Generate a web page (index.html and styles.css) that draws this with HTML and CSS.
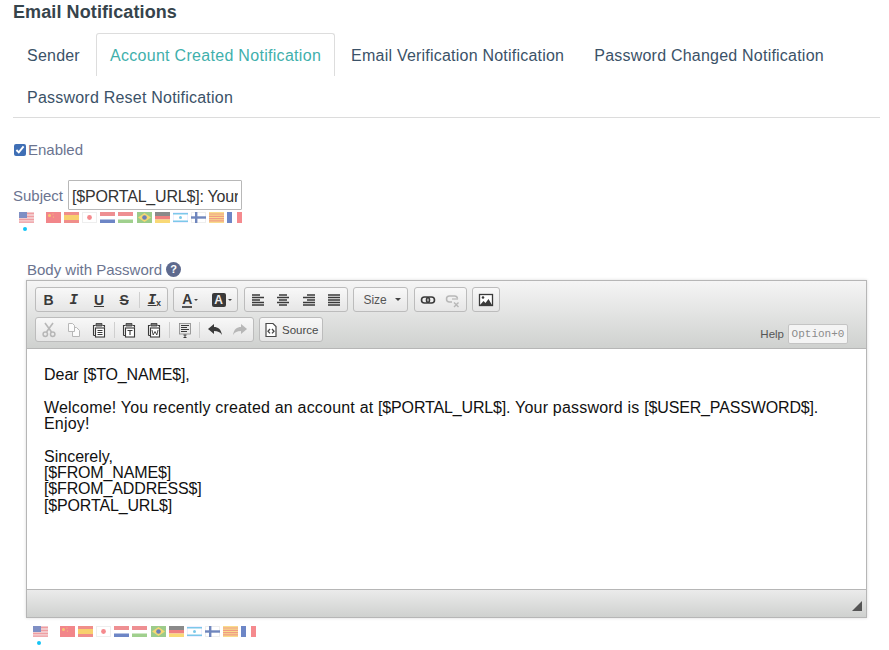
FILE: index.html
```html
<!DOCTYPE html>
<html lang="en">
<head>
<meta charset="utf-8">
<title>Email Notifications</title>
<link rel="stylesheet" href="styles.css">
</head>
<body>
<svg class="sprite" width="0" height="0" aria-hidden="true">
  <symbol id="f-us" viewBox="0 0 15 11"><rect width="15" height="11" fill="#f3c9cb"/><path d="M0 1.5h15M0 4.5h15M0 7.5h15M0 10.2h15" stroke="#ef9ea2" stroke-width="1"/><rect width="8" height="6" fill="#7f8fc4"/></symbol>
  <symbol id="f-cn" viewBox="0 0 15 11"><rect width="15" height="11" fill="#f2868a"/><circle cx="3.5" cy="3.5" r="1.5" fill="#f6c873"/><circle cx="7" cy="2" r=".6" fill="#f6c873"/><circle cx="7.5" cy="5" r=".6" fill="#f6c873"/></symbol>
  <symbol id="f-es" viewBox="0 0 15 11"><rect width="15" height="11" fill="#f08e8a"/><rect y="3" width="15" height="5" fill="#f8d06e"/></symbol>
  <symbol id="f-jp" viewBox="0 0 15 11"><rect x=".5" y=".5" width="14" height="10" fill="#fff" stroke="#eee"/><circle cx="7.5" cy="5.5" r="2.4" fill="#f58a8e"/></symbol>
  <symbol id="f-nl" viewBox="0 0 15 11"><rect width="15" height="4" fill="#ee8f92"/><rect y="4" width="15" height="3.500" fill="#fff"/><rect y="7.500" width="15" height="3.500" fill="#6d86c6"/></symbol>
  <symbol id="f-hu" viewBox="0 0 15 11"><rect width="15" height="4" fill="#ee8f92"/><rect y="4" width="15" height="3.500" fill="#fff"/><rect y="7.500" width="15" height="3.500" fill="#a0d08e"/></symbol>
  <symbol id="f-br" viewBox="0 0 15 11"><rect width="15" height="11" fill="#9ccb8a"/><path d="M7.500 1 14 5.500 7.500 10 1 5.500z" fill="#f5d873"/><circle cx="7.500" cy="5.500" r="2.300" fill="#6a80b8"/></symbol>
  <symbol id="f-de" viewBox="0 0 15 11"><rect width="15" height="4" fill="#8a8a8a"/><rect y="4" width="15" height="3.500" fill="#ee8080"/><rect y="7.500" width="15" height="3.500" fill="#f9d976"/></symbol>
  <symbol id="f-il" viewBox="0 0 15 11"><rect x=".5" y=".5" width="14" height="10" fill="#fff" stroke="#eef"/><rect y="1" width="15" height="1.500" fill="#7cc8ea"/><rect y="8.500" width="15" height="1.500" fill="#7cc8ea"/><circle cx="7.500" cy="5.500" r="1.500" fill="#7cc8ea"/></symbol>
  <symbol id="f-fi" viewBox="0 0 15 11"><rect x=".5" y=".5" width="14" height="10" fill="#fff" stroke="#eee"/><rect y="4.300" width="15" height="2.400" fill="#6f86bd"/><rect x="4" width="2.400" height="11" fill="#6f86bd"/></symbol>
  <symbol id="f-ca" viewBox="0 0 15 11"><rect width="15" height="11" fill="#f9dc8c"/><path d="M0 2h15M0 4.300h15M0 6.600h15M0 8.900h15" stroke="#f09a84" stroke-width="1.200"/></symbol>
  <symbol id="f-fr" viewBox="0 0 15 11"><rect width="15" height="11" fill="#fff"/><rect width="5" height="11" fill="#6d86c6"/><rect x="10" width="5" height="11" fill="#f58a8e"/></symbol>

  <symbol id="i-cut" viewBox="0 0 16 16"><path d="M4 1l6.500 9M12 1L5.500 10" fill="none" stroke="currentColor" stroke-width="1.600"/><circle cx="4.300" cy="12.300" r="2.200" fill="none" stroke="currentColor" stroke-width="1.500"/><circle cx="11.700" cy="12.300" r="2.200" fill="none" stroke="currentColor" stroke-width="1.500"/></symbol>
  <symbol id="i-copy" viewBox="0 0 16 16"><path d="M2.500 1.500h4l2 2v6h-6zM8.500 5.500h2l3 3v6h-7v-5" fill="#fff" stroke="currentColor"/></symbol>
  <symbol id="i-paste" viewBox="0 0 16 16"><path d="M2.500 13.500v-10h2M11.500 3.500h2v2" fill="none" stroke="currentColor" stroke-width="1.100"/><path d="M2.500 13.500h2" stroke="currentColor"/><path d="M5 1.500h6V4H5z" fill="#777" stroke="currentColor" stroke-width=".8"/><rect x="4.500" y="6" width="9" height="9" fill="#fff" stroke="currentColor" stroke-width="1.100"/><path d="M6.500 8.500h5M6.500 10.500h5M6.500 12.500h5" stroke="currentColor"/></symbol>
  <symbol id="i-paste-t" viewBox="0 0 16 16"><path d="M2.500 13.500v-10h2M11.500 3.500h2v2" fill="none" stroke="currentColor" stroke-width="1.100"/><path d="M2.500 13.500h2" stroke="currentColor"/><path d="M5 1.500h6V4H5z" fill="#777" stroke="currentColor" stroke-width=".8"/><rect x="4.500" y="6" width="9" height="9" fill="#fff" stroke="currentColor" stroke-width="1.100"/><path d="M6.500 8.500h5M9 8.500v4.500" stroke="currentColor" stroke-width="1.100"/></symbol>
  <symbol id="i-paste-w" viewBox="0 0 16 16"><path d="M2.500 13.500v-10h2M11.500 3.500h2v2" fill="none" stroke="currentColor" stroke-width="1.100"/><path d="M2.500 13.500h2" stroke="currentColor"/><path d="M5 1.500h6V4H5z" fill="#777" stroke="currentColor" stroke-width=".8"/><rect x="4.500" y="6" width="9" height="9" fill="#fff" stroke="currentColor" stroke-width="1.100"/><path d="M6 8l1.200 5L9 9.500l1.800 3.500L12 8" fill="none" stroke="currentColor" stroke-width=".9"/></symbol>
  <symbol id="i-spell" viewBox="0 0 16 16"><rect x="2.500" y="1.500" width="11" height="10.500" fill="#e8e8e8" stroke="#888" stroke-width=".8"/><path d="M4 3.500h8M4 5.500h6M4 7.500h8M4 9.500h6" stroke="currentColor"/><path d="M6.500 13h3M8 13v2.500M6.500 15.500h3" stroke="currentColor"/></symbol>
  <symbol id="i-undo" viewBox="0 0 16 16"><path d="M1 7l6-5v3c4 0 7 2 8 8-2-3-4-4-8-4v3z" fill="currentColor"/></symbol>
  <symbol id="i-redo" viewBox="0 0 16 16"><path d="M15 7L9 2v3C5 5 2 7 1 13c2-3 4-4 8-4v3z" fill="currentColor"/></symbol>
  <symbol id="i-left" viewBox="0 0 16 16"><path d="M2 3h8M2 5.500h12M2 8h8M2 10.500h12M2 13h12" stroke="currentColor" stroke-width="1.500"/></symbol>
  <symbol id="i-center" viewBox="0 0 16 16"><path d="M4 3h8M2 5.500h12M4 8h8M2 10.500h12M4 13h8" stroke="currentColor" stroke-width="1.500"/></symbol>
  <symbol id="i-right" viewBox="0 0 16 16"><path d="M6 3h8M2 5.500h12M6 8h8M2 10.500h12M2 13h12" stroke="currentColor" stroke-width="1.500"/></symbol>
  <symbol id="i-justify" viewBox="0 0 16 16"><path d="M2 3h12M2 5.500h12M2 8h12M2 10.500h12M2 13h12" stroke="currentColor" stroke-width="1.500"/></symbol>
  <symbol id="i-link" viewBox="0 0 16 16"><rect x="1.500" y="5" width="8" height="6" rx="3" fill="none" stroke="currentColor" stroke-width="1.600"/><rect x="6.500" y="5" width="8" height="6" rx="3" fill="none" stroke="currentColor" stroke-width="1.600"/></symbol>
  <symbol id="i-unlink" viewBox="0 0 16 16"><path d="M7 10H4.500a3 3 0 0 1 0-6h5a3 3 0 0 1 3 2.500" fill="none" stroke="currentColor" stroke-width="1.500"/><path d="M9 10.500l4.500 4.500M13.500 10.500L9 15" stroke="currentColor" stroke-width="1.400"/><path d="M7 7h6" stroke="currentColor" stroke-width="1.200"/></symbol>
  <symbol id="i-image" viewBox="0 0 16 16"><rect x="1.500" y="2.500" width="13" height="11" fill="#fff" stroke="currentColor" stroke-width="1.300"/><circle cx="5" cy="5.500" r="1.300" fill="currentColor"/><path d="M2 13l3.500-4 2 2 3-4 3.500 6z" fill="currentColor"/></symbol>
  <symbol id="i-source" viewBox="0 0 16 16"><path d="M3 1.500h7l3 3v10H3z" fill="#fff" stroke="currentColor" stroke-width="1.200"/><path d="M7 7L5 9.200 7 11.400M9 7l2 2.200-2 2.200" fill="none" stroke="currentColor" stroke-width="1.300"/></symbol>
</svg>

<main class="page">
  <h1 class="title">Email Notifications</h1>

  <nav class="tabs">
    <a class="tab">Sender</a>
    <a class="tab tab-active">Account Created Notification</a>
    <a class="tab">Email Verification Notification</a>
    <a class="tab">Password Changed Notification</a>
    <a class="tab">Password Reset Notification</a>
  </nav>

  <label class="enabled"><input class="check" type="checkbox" checked>Enabled</label>

  <div class="subject">
    <label class="field-label" for="subject">Subject</label>
    <input class="subject-input" id="subject" type="text" value="[$PORTAL_URL$]: Your password">
  </div>

  <div class="flags flags-subject">
    <span class="flag flag-current"><svg width="15" height="11"><use href="#f-us"/></svg></span>
    <span class="flag"><svg width="15" height="11"><use href="#f-cn"/></svg></span>
    <span class="flag"><svg width="15" height="11"><use href="#f-es"/></svg></span>
    <span class="flag"><svg width="15" height="11"><use href="#f-jp"/></svg></span>
    <span class="flag"><svg width="15" height="11"><use href="#f-nl"/></svg></span>
    <span class="flag"><svg width="15" height="11"><use href="#f-hu"/></svg></span>
    <span class="flag"><svg width="15" height="11"><use href="#f-br"/></svg></span>
    <span class="flag"><svg width="15" height="11"><use href="#f-de"/></svg></span>
    <span class="flag"><svg width="15" height="11"><use href="#f-il"/></svg></span>
    <span class="flag"><svg width="15" height="11"><use href="#f-fi"/></svg></span>
    <span class="flag"><svg width="15" height="11"><use href="#f-ca"/></svg></span>
    <span class="flag"><svg width="15" height="11"><use href="#f-fr"/></svg></span>
  </div>

  <section class="body-field">
    <div class="body-label"><span class="field-label">Body with Password</span><span class="hint">?</span></div>

    <div class="editor">
      <div class="toolbar">
        <div class="tool-row">
          <div class="group">
            <span class="btn txt"><b>B</b></span>
            <span class="btn txt"><b class="slab">I</b></span>
            <span class="btn txt"><b class="under">U</b></span>
            <span class="btn txt"><b class="strike">S</b></span>
            <span class="sep"></span>
            <span class="btn txt"><b class="slab under">I</b><b class="sub">x</b></span>
          </div>
          <div class="group">
            <span class="btn btn-color txt"><b class="a-fore">A</b><span class="caret-small"></span></span>
            <span class="btn btn-color txt"><b class="a-back">A</b><span class="caret-small"></span></span>
          </div>
          <div class="group">
            <span class="btn wide"><svg width="16" height="16"><use href="#i-left"/></svg></span>
            <span class="btn wide"><svg width="16" height="16"><use href="#i-center"/></svg></span>
            <span class="btn wide"><svg width="16" height="16"><use href="#i-right"/></svg></span>
            <span class="btn wide"><svg width="16" height="16"><use href="#i-justify"/></svg></span>
          </div>
          <div class="group combo"><span>Size</span><span class="caret"></span></div>
          <div class="group">
            <span class="btn wide"><svg width="16" height="16"><use href="#i-link"/></svg></span>
            <span class="btn wide off"><svg width="16" height="16"><use href="#i-unlink"/></svg></span>
          </div>
          <div class="group">
            <span class="btn wide"><svg width="16" height="16"><use href="#i-image"/></svg></span>
          </div>
        </div>
        <div class="tool-row">
          <div class="group">
            <span class="btn off"><svg width="16" height="16"><use href="#i-cut"/></svg></span>
            <span class="btn off"><svg width="16" height="16"><use href="#i-copy"/></svg></span>
            <span class="btn"><svg width="16" height="16"><use href="#i-paste"/></svg></span>
            <span class="sep"></span>
            <span class="btn"><svg width="16" height="16"><use href="#i-paste-t"/></svg></span>
            <span class="btn"><svg width="16" height="16"><use href="#i-paste-w"/></svg></span>
            <span class="sep"></span>
            <span class="btn"><svg width="16" height="16"><use href="#i-spell"/></svg></span>
            <span class="sep"></span>
            <span class="btn"><svg width="16" height="16"><use href="#i-undo"/></svg></span>
            <span class="btn off"><svg width="16" height="16"><use href="#i-redo"/></svg></span>
          </div>
          <div class="group source"><svg width="16" height="16"><use href="#i-source"/></svg><span>Source</span></div>
          <div class="help"><span>Help</span><span class="help-key">Option+0</span></div>
        </div>
      </div>

      <div class="content">
        <p>Dear <span class="tok">[$TO_NAME$]</span>,</p>
        <p class="prose">Welcome! You recently created an account at <span class="tok">[$PORTAL_URL$]</span>. Your password is <span class="tok">[$USER_PASSWORD$]</span>.<br>Enjoy!</p>
        <p>Sincerely,<br><span class="tok">[$FROM_NAME$]</span><br><span class="tok">[$FROM_ADDRESS$]</span><br><span class="tok">[$PORTAL_URL$]</span></p>
      </div>

      <div class="statusbar"><span class="resizer"></span></div>
    </div>

    <div class="flags flags-body">
      <span class="flag flag-current"><svg width="15" height="11"><use href="#f-us"/></svg></span>
      <span class="flag"><svg width="15" height="11"><use href="#f-cn"/></svg></span>
      <span class="flag"><svg width="15" height="11"><use href="#f-es"/></svg></span>
      <span class="flag"><svg width="15" height="11"><use href="#f-jp"/></svg></span>
      <span class="flag"><svg width="15" height="11"><use href="#f-nl"/></svg></span>
      <span class="flag"><svg width="15" height="11"><use href="#f-hu"/></svg></span>
      <span class="flag"><svg width="15" height="11"><use href="#f-br"/></svg></span>
      <span class="flag"><svg width="15" height="11"><use href="#f-de"/></svg></span>
      <span class="flag"><svg width="15" height="11"><use href="#f-il"/></svg></span>
      <span class="flag"><svg width="15" height="11"><use href="#f-fi"/></svg></span>
      <span class="flag"><svg width="15" height="11"><use href="#f-ca"/></svg></span>
      <span class="flag"><svg width="15" height="11"><use href="#f-fr"/></svg></span>
    </div>
  </section>
</main>
</body>
</html>
```

FILE: styles.css
```css
* { box-sizing: border-box; }

html, body {
  margin: 0;
  height: 650px;
  overflow: hidden;
  background: #fff;
}

body {
  font-family: "Liberation Sans", Arial, sans-serif;
  color: #2b3a42;
}

.sprite { position: absolute; }

.page { padding: 0 9px 0 13px; }

.title {
  margin: 0;
  height: 33px;
  font-size: 18px;
  line-height: 24px;
  font-weight: 700;
  letter-spacing: .1px;
  color: #36444c;
}

.tabs {
  display: flex;
  flex-wrap: wrap;
  border-bottom: 1px solid #dcdcdc;
}

.tab {
  height: 43px;
  margin: 0 2px -1px 0;
  padding: 1px 13px 0;
  border: 1px solid transparent;
  border-bottom: 0;
  border-radius: 3px 3px 0 0;
  font-size: 16px;
  letter-spacing: .22px;
  line-height: 42px;
  color: #3b5268;
}

.tab-active {
  color: #3fb0ac;
  letter-spacing: .3px;
  border-color: #dddddd;
  background: #fff;
}

.enabled {
  display: flex;
  align-items: center;
  margin-top: 21px;
  height: 20px;
  font-size: 15px;
  color: #6b7490;
}

.check {
  width: 12px;
  height: 12px;
  margin: 1px 2px 0 1px;
  accent-color: #3f6fb5;
}

.field-label {
  font-size: 15px;
  color: #6b7490;
}

.subject {
  display: flex;
  align-items: center;
  gap: 5px;
  margin-top: 21px;
  height: 30px;
}

.subject-input {
  width: 174px;
  height: 30px;
  padding: 3px 3px 0;
  border: 1px solid #b8b8b8;
  border-radius: 1px;
  font: 16px "Liberation Sans", Arial, sans-serif;
  letter-spacing: -.2px;
  color: #333;
  background: #fff;
}

.flags {
  display: flex;
  gap: 3.100px;
}

.flags-subject { margin: 2px 0 0 6px; }
.flags-body { margin: 8px 0 0 7px; }

.flag {
  position: relative;
  display: block;
  width: 15px;
  height: 11px;
}

.flag svg { display: block; }

.flag-current { margin-right: 9px; }

.flag-current::after {
  content: "";
  position: absolute;
  left: 4px;
  top: 15px;
  width: 4px;
  height: 4px;
  border-radius: 50%;
  background: #14c4f5;
}

.body-field { margin: 35px 0 0 13px; width: 841px; }

.body-label {
  display: flex;
  align-items: center;
  gap: 4px;
  height: 21px;
  margin-bottom: 1px;
  padding: 1px 0 0 1px;
}

.hint {
  width: 15px;
  height: 15px;
  border-radius: 50%;
  background: #5e6a8e;
  color: #fff;
  font-size: 11px;
  font-weight: 700;
  line-height: 15px;
  text-align: center;
}

.editor {
  border: 1px solid #b6b6b6;
  box-shadow: 0 0 3px rgba(0, 0, 0, .15);
}

.toolbar {
  height: 68px;
  padding: 6px 8px 0;
  background: linear-gradient(#f5f5f5, #cfd1cf);
  border-bottom: 1px solid #b6b6b6;
}

.tool-row {
  display: flex;
  height: 25px;
  margin-bottom: 5px;
  gap: 5.500px;
}

.group {
  display: flex;
  align-items: center;
  border: 1px solid #bcbcbc;
  border-radius: 3px;
  background: linear-gradient(#f8f8f8, #e6e6e6);
  color: #333;
}

.btn {
  display: flex;
  align-items: center;
  justify-content: center;
  width: 25.200px;
  height: 23px;
  color: #3a3a3a;
}

.wide { width: 25.500px; }

.btn svg { display: block; }

.off { color: #aaa; opacity: .8; }

.txt {
  font: 14px "Liberation Sans", Arial, sans-serif;
}

.slab {
  font-family: "Liberation Mono", monospace;
  font-style: italic;
}

.under { text-decoration: underline; }
.strike { text-decoration: line-through; }

.sub { font-size: 9px; margin-top: 7px; }

.sep {
  width: 1px;
  height: 16px;
  margin: 0 2px;
  background: #cfcfcf;
}

.btn-color { width: 31.500px; gap: 2px; }

.a-fore {
  border-bottom: 2px solid #555;
  line-height: 14px;
}

.a-back {
  width: 14px;
  height: 14px;
  border-radius: 2px;
  background: #3a3a3a;
  color: #eee;
  font-size: 12px;
  line-height: 14px;
  text-align: center;
}

.caret-small {
  width: 0;
  height: 0;
  border: 2.500px solid transparent;
  border-top-color: #444;
  border-bottom: 0;
}

.combo {
  width: 55px;
  padding: 0 6px 0 9px;
  justify-content: space-between;
  font-size: 12px;
  color: #555;
}

.caret {
  width: 0;
  height: 0;
  border: 3px solid transparent;
  border-top-color: #444;
  border-bottom: 0;
}

.source {
  gap: 3px;
  padding: 0 4px 0 3px;
  font-size: 11.500px;
  color: #484848;
}

.help {
  display: flex;
  align-items: center;
  gap: 4px;
  margin: 7px 10px 0 auto;
  height: 20px;
  font-size: 11.500px;
  color: #555;
}

.help-key {
  height: 20px;
  width: 60px;
  border: 1px solid #c4c4c4;
  border-radius: 2px;
  background: #f4f4f4;
  font: 11px/18px "Liberation Mono", monospace;
  color: #8c8c8c;
  text-align: center;
}

.content {
  height: 240px;
  padding: 18px 17px 0;
  background: #fff;
  font-size: 16px;
  line-height: 16.300px;
  color: #111;
}

.content p { margin: 0 0 16.500px; }

.prose { letter-spacing: .2px; }

.tok { letter-spacing: -.15px; }

.statusbar {
  display: flex;
  justify-content: flex-end;
  height: 28px;
  padding: 11px 4px 0 0;
  border-top: 1px solid #b6b6b6;
  background: linear-gradient(#ebebeb, #cfd1cf);
}

.resizer {
  width: 10px;
  height: 10px;
  background: #555;
  clip-path: polygon(100% 0, 100% 100%, 0 100%);
}
```
